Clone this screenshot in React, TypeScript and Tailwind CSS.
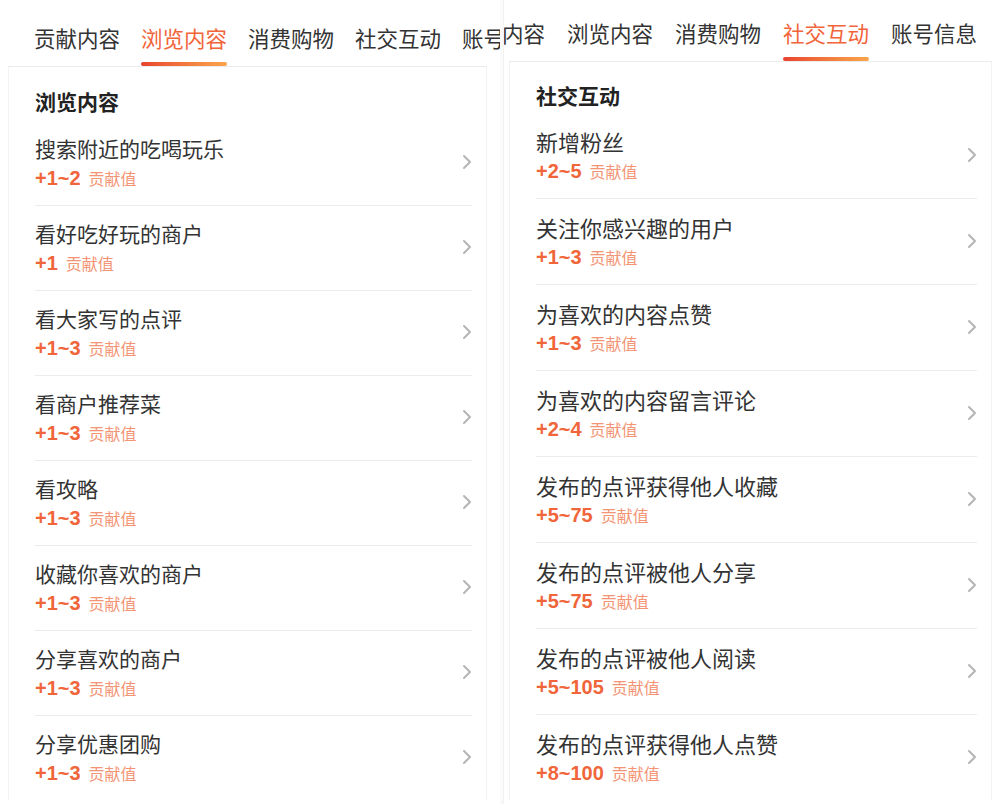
import React from 'react';

type Item = { title: string; points: string };

const browseItems: Item[] = [
  { title: '搜索附近的吃喝玩乐', points: '+1~2' },
  { title: '看好吃好玩的商户', points: '+1' },
  { title: '看大家写的点评', points: '+1~3' },
  { title: '看商户推荐菜', points: '+1~3' },
  { title: '看攻略', points: '+1~3' },
  { title: '收藏你喜欢的商户', points: '+1~3' },
  { title: '分享喜欢的商户', points: '+1~3' },
  { title: '分享优惠团购', points: '+1~3' },
];

const socialItems: Item[] = [
  { title: '新增粉丝', points: '+2~5' },
  { title: '关注你感兴趣的用户', points: '+1~3' },
  { title: '为喜欢的内容点赞', points: '+1~3' },
  { title: '为喜欢的内容留言评论', points: '+2~4' },
  { title: '发布的点评获得他人收藏', points: '+5~75' },
  { title: '发布的点评被他人分享', points: '+5~75' },
  { title: '发布的点评被他人阅读', points: '+5~105' },
  { title: '发布的点评获得他人点赞', points: '+8~100' },
];

const tabs = ['贡献内容', '浏览内容', '消费购物', '社交互动', '账号信息'];

const cjk = "font-['Noto_Sans_CJK_SC',sans-serif]";

function Chevron() {
  return (
    <svg width="10" height="16" viewBox="0 0 10 16" fill="none" className="shrink-0">
      <path d="M2 2l6 6-6 6" stroke="#b5b5b5" strokeWidth="2" strokeLinecap="round" strokeLinejoin="round" />
    </svg>
  );
}

function TabBar({ active, offset }: { active: string; offset: 'left' | 'right' }) {
  return (
    <div className="overflow-hidden">
      <div
        className={
          offset === 'left'
            ? 'flex gap-[21px] whitespace-nowrap pl-[34px] pt-[23px]'
            : 'flex gap-[22px] whitespace-nowrap ml-[-45px] pt-[18px]'
        }
      >
        {tabs.map((t) => (
          <div key={t} className="flex flex-col shrink-0">
            <span
              className={`${cjk} text-[21.5px] leading-[30px] ${
                t === active ? 'text-[#f2643a]' : 'text-[#333]'
              }`}
            >
              {t}
            </span>
            <div
              className={`mt-[9px] h-[4px] rounded-full ${
                t === active ? 'bg-gradient-to-r from-[#e9412f] to-[#f8a54c]' : 'bg-transparent'
              }`}
            />
          </div>
        ))}
      </div>
    </div>
  );
}

function Row({ item, last, big }: { item: Item; last: boolean; big: boolean }) {
  return (
    <div
      className={`flex items-center justify-between ${big ? 'pt-[14px] pb-[15px]' : 'pt-[13px] pb-[15px]'} ${
        last ? '' : 'border-b border-[#ececec]'
      }`}
    >
      <div className="flex flex-col">
        <span className={`${cjk} ${big ? 'text-[22px]' : 'text-[21px]'} leading-[28px] text-[#333]`}>
          {item.title}
        </span>
        <div className="mt-[4px] flex items-baseline h-[24px]">
          <span className="font-['Liberation_Sans',sans-serif] text-[20px] leading-[24px] font-semibold text-[#f0653a]">
            {item.points}
          </span>
          <span className={`${cjk} ml-[8px] text-[16px] leading-[24px] text-[#f39575]`}>贡献值</span>
        </div>
      </div>
      <Chevron />
    </div>
  );
}

function Panel({
  active,
  section,
  items,
  side,
}: {
  active: string;
  section: string;
  items: Item[];
  side: 'left' | 'right';
}) {
  const left = side === 'left';
  return (
    <div className={`h-[804px] overflow-hidden bg-white ${left ? 'w-[500px]' : 'flex-1 border-l border-[#f2f2f2]'}`}>
      <TabBar active={active} offset={side} />
      <div className={left ? 'ml-[8px] mr-[13px]' : 'ml-[5px] mr-[8px]'}>
        <div className="h-px bg-[#ebebeb]" />
        <div className="border-x border-[#f3f3f3] pl-[26px] pr-[14px]">
          <div
            className={`${cjk} font-bold text-[21px] leading-[28px] text-[#222] ${
              left ? 'pt-[20px] mb-[6px]' : 'pt-[19px] mb-[4px]'
            }`}
          >
            {section}
          </div>
          {items.map((it, i) => (
            <Row key={it.title} item={it} last={i === items.length - 1} big={!left} />
          ))}
        </div>
      </div>
    </div>
  );
}

export default function App() {
  return (
    <div className="flex w-[1000px] h-[804px] overflow-hidden bg-white">
      <Panel active="浏览内容" section="浏览内容" items={browseItems} side="left" />
      <div className="w-[3px] bg-[#fafafa]" />
      <Panel active="社交互动" section="社交互动" items={socialItems} side="right" />
    </div>
  );
}
